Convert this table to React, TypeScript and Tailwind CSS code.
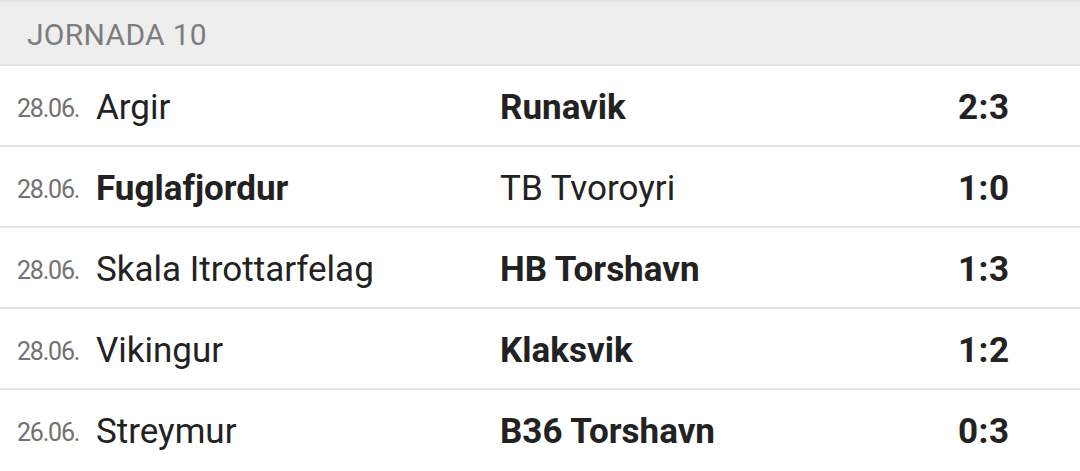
import React from "react";

const matches = [
  { date: "28.06.", home: "Argir", away: "Runavik", score: "2:3", win: "away" },
  { date: "28.06.", home: "Fuglafjordur", away: "TB Tvoroyri", score: "1:0", win: "home" },
  { date: "28.06.", home: "Skala Itrottarfelag", away: "HB Torshavn", score: "1:3", win: "away" },
  { date: "28.06.", home: "Vikingur", away: "Klaksvik", score: "1:2", win: "away" },
  { date: "26.06.", home: "Streymur", away: "B36 Torshavn", score: "0:3", win: "away" },
];

export default function App() {
  return (
    <div
      className="w-[1080px] h-[471px] overflow-hidden bg-white"
      style={{ fontFamily: "Roboto, 'Noto Sans', sans-serif" }}
    >
      <div className="h-[66px] border-t-2 border-b-2 border-[#e2e2e2] bg-[#eeeeee] flex items-center pl-[27px]">
        <span className="text-[30px] tracking-[0.3px] text-[#7d7d7d] leading-none pt-[3px]">JORNADA 10</span>
      </div>
      {matches.map((m, i) => (
        <div
          key={i}
          className={`h-[81px] flex items-baseline pt-[24px] pl-[17px] text-[#222222] ${
            i < matches.length - 1 ? "border-b-2 border-[#e2e2e2]" : ""
          }`}
        >
          <span className="w-[79px] text-[25px] text-[#727272] tracking-[-1.2px] leading-none -translate-y-[2px]">
            {m.date}
          </span>
          <span className={`w-[404px] text-[35px] leading-none ${m.win === "home" ? "font-bold" : "font-normal"}`}>
            {m.home}
          </span>
          <span className={`w-[458px] text-[35px] leading-none ${m.win === "away" ? "font-bold" : "font-normal"}`}>
            {m.away}
          </span>
          <span className="text-[35px] font-bold leading-none tracking-[0.5px]">{m.score}</span>
        </div>
      ))}
    </div>
  );
}
